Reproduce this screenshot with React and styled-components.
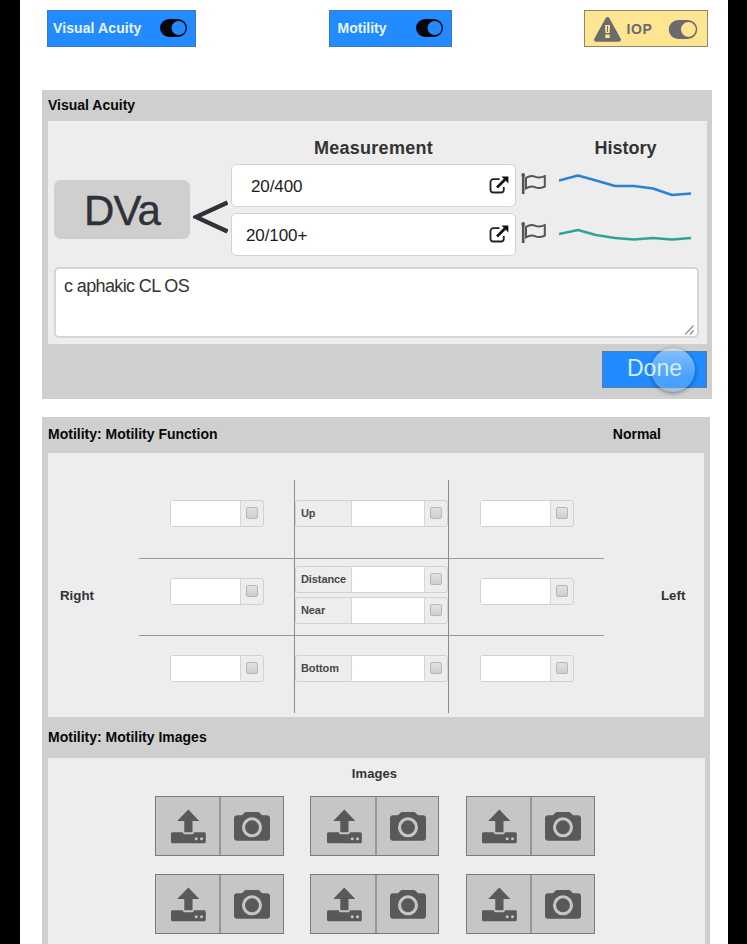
import React from "react";
import styled, { createGlobalStyle } from "styled-components";

const GlobalStyle = createGlobalStyle`
  *, *::before, *::after { box-sizing: border-box; }
  body { margin: 0; background: #000; overflow: hidden; }
  body, button, input, textarea { font-family: "Liberation Sans", Arial, Helvetica, sans-serif; }
`;

const Screen = styled.main`
  display: flex;
  flex-direction: column;
  width: 708px;
  height: 944px;
  margin-left: 20px;
  padding: 10px 0 0 22px;
  overflow: hidden;
  background: #fff;
`;

const Toolbar = styled.nav`
  display: flex;
  justify-content: space-between;
  height: 37px;
  width: 661px;
  margin: 0 0 43px 5px;
`;

const ToggleButton = styled.button`
  display: flex;
  align-items: center;
  justify-content: space-between;
  width: ${(p) => p.$width}px;
  height: 37px;
  padding: ${(p) => (p.$warning ? "1px 9px 0 9px" : "0 8px 2px 5px")};
  padding-left: ${(p) => p.$inset}px;
  border: 1px solid ${(p) => (p.$warning ? "#8f856b" : "#3d79b8")};
  background: ${(p) => (p.$warning ? "#fee591" : "#218bff")};
  color: ${(p) => (p.$warning ? "#6b6a6c" : "#e9f5ff")};
  font-size: 14px;
  font-weight: bold;
  line-height: 20px;
  white-space: nowrap;
`;

const ToggleLabel = styled.span`
  margin-right: ${(p) => p.$after || 0}px;
  letter-spacing: ${(p) => p.$spacing || 0}px;
`;

const Panel = styled.section`
  display: flex;
  flex-direction: column;
  flex: none;
  width: ${(p) => p.$width}px;
  height: ${(p) => p.$height}px;
  margin-bottom: 18px;
  padding-left: 6px;
  background: #cfcfcf;
`;

const PanelHeader = styled.header`
  display: flex;
  justify-content: space-between;
  flex: none;
  height: ${(p) => p.$height}px;
  padding: ${(p) => p.$top}px 49px 0 0;
`;

const PanelTitle = styled.h2`
  margin: 0;
  color: #080808;
  font-size: 14px;
  line-height: 16px;
`;

const PanelBody = styled.div`
  flex: none;
  width: ${(p) => p.$width}px;
  height: ${(p) => p.$height}px;
  background: #ededed;
`;

const AcuityGrid = styled.div`
  display: grid;
  grid-template-columns: 136px 41px 285px 36px 147px;
  grid-template-rows: 43px 92px;
  padding-left: 6px;
`;

const ColumnHeading = styled.h3`
  grid-column: ${(p) => p.$column};
  margin: 0;
  padding-top: 17px;
  color: #333;
  font-size: 18px;
  line-height: 21px;
  text-align: center;
  letter-spacing: ${(p) => p.$spacing}px;
`;

const AcuityBadge = styled.div`
  grid-row: 2;
  grid-column: 1;
  height: 59px;
  margin-top: 16px;
  border-radius: 7px;
  background: #cfcfcf;
  color: #303238;
  font-size: 42px;
  line-height: 62px;
  letter-spacing: -0.8px;
  text-align: center;
  -webkit-text-stroke: 0.4px #303238;
`;

const BranchSlot = styled.div`
  grid-row: 2;
  grid-column: 2;
  padding: 36px 0 0 3px;
  svg { display: block; }
`;

const Stack = styled.div`
  display: flex;
  flex-direction: column;
  grid-row: 2;
  grid-column: ${(p) => p.$column};
  gap: ${(p) => p.$gap || 0}px;
  padding: ${(p) => p.$pad || "0"};
  svg { display: block; flex: none; }
`;

const AcuityField = styled.div`
  display: flex;
  align-items: center;
  justify-content: space-between;
  height: 43px;
  padding: 2px 6px 0 ${(p) => p.$inset}px;
  border: 1px solid #d2d2d2;
  border-radius: 5px;
  background: #fff;
  color: #1c1c1c;
  font-size: 17px;
  letter-spacing: -0.1px;
  svg { margin-bottom: 3px; }
`;

const Notes = styled.div`
  display: flex;
  justify-content: space-between;
  width: 645px;
  height: 71px;
  margin: 11px 0 0 6px;
  padding: 7px 0 0 8px;
  border: 2px solid #d5d5d5;
  border-radius: 5px;
  background: #fff;
  color: #333;
  font-size: 18px;
  line-height: 21px;
  letter-spacing: -0.62px;
  svg { align-self: flex-end; }
`;

const PanelFooter = styled.footer`
  display: flex;
  justify-content: flex-end;
  padding: 7px 5px 0 0;
`;

const DoneButton = styled.button`
  position: relative;
  width: 105px;
  height: 37px;
  padding: 0 0 2px;
  border: 1px solid #567d9f;
  background: #218bff;
  color: #d8ecff;
  font-size: 23px;
  line-height: 33px;
`;

const TouchPoint = styled.span`
  position: absolute;
  top: -4px;
  left: 48px;
  width: 44px;
  height: 44px;
  border-radius: 50%;
  background: linear-gradient(rgba(190, 224, 250, 0.65), rgba(120, 190, 250, 0.45) 65%, rgba(110, 180, 245, 0.5));
  box-shadow: 0 1px 4px rgba(0, 0, 0, 0.45);
`;

const DoneLabel = styled.span`
  position: relative;
  z-index: 1;
`;

const MotilityLayout = styled.div`
  display: grid;
  grid-template-columns: 91px 465px 1fr;
  padding-top: 27px;
`;

const SideLabel = styled.div`
  padding: 108px 0 0 ${(p) => p.$inset}px;
  color: #333;
  font-size: 13.3px;
  font-weight: bold;
  line-height: 16px;
`;

const GazeGrid = styled.div`
  display: grid;
  grid-template-columns: 156px 154px 155px;
  grid-template-rows: 79px 77px 77px;
`;

const GazeCell = styled.div`
  display: flex;
  flex-direction: column;
  gap: 4px;
  padding: ${(p) => p.$top}px 0 0 ${(p) => p.$left || 0}px;
  border-right: ${(p) => (p.$right ? "1.5px solid #8c8c8c" : "0")};
  border-bottom: ${(p) => (p.$bottom ? "1.5px solid #999" : "0")};
`;

const GazeField = styled.div`
  display: flex;
  flex: none;
  width: ${(p) => (p.$labelled ? 153 : 94)}px;
  height: 27px;
  border: 1px solid #d1d1d1;
  border-radius: 3px;
`;

const GazeName = styled.span`
  width: 56px;
  padding-left: 5px;
  border-right: 1px solid #d5d5d5;
  color: #484848;
  font-size: 11px;
  font-weight: bold;
  line-height: 24px;
  letter-spacing: -0.1px;
`;

const GazeValue = styled.span`
  flex: 1;
  background: #fff;
`;

const GazeCheck = styled.span`
  display: flex;
  align-items: center;
  justify-content: center;
  width: 23px;
  padding: 0 1px 1px 0;
  border-left: 1px solid #d5d5d5;
`;

const CheckBox = styled.i`
  width: 12px;
  height: 12px;
  border: 1px solid #b7b7b7;
  border-radius: 2px;
  background: linear-gradient(#e2e2e2, #cecece);
`;

const ImagesHeading = styled.h3`
  margin: 0;
  padding: 8px 4px 0 0;
  color: #333;
  font-size: 13px;
  line-height: 16px;
  text-align: center;
  letter-spacing: 0.1px;
`;

const ImageGrid = styled.div`
  display: grid;
  grid-template-columns: repeat(3, 129px);
  gap: 18px 26.5px;
  padding: 14px 0 0 106.5px;
`;

const ImageActions = styled.div`
  display: flex;
  height: 60px;
  border: 1px solid #7b7b7b;
  background: #c6c6c6;
`;

const ImageAction = styled.button`
  display: flex;
  align-items: center;
  justify-content: center;
  flex: 1;
  padding: 0 0 0 ${(p) => p.$shift}px;
  border: 0;
  background: transparent;
  & + & { border-left: 2px solid #979797; }
`;

function ToggleIcon({ color, width = 27, height = 18 }) {
  return (
    <svg width={width} height={height} viewBox="0 0 27 18">
      <path
        fill={color}
        fillRule="evenodd"
        d="M9 0h9a9 9 0 0 1 0 18H9A9 9 0 0 1 9 0Zm9.600 2a7 7 0 1 0 0 14a7 7 0 0 0 0-14Z"
      />
    </svg>
  );
}

function WarningIcon() {
  return (
    <svg width="27" height="25" viewBox="0 0 27 25">
      <path
        fill="#6b6a6c"
        fillRule="evenodd"
        d="M13.500 0c.8 0 1.400.4 1.800 1.100l11.300 20.500c.8 1.500 0 3.200-1.800 3.200H2.200c-1.800 0-2.600-1.700-1.800-3.200L11.700 1.100C12.100.4 12.700 0 13.500 0ZM11 8l.4 8h4.200l.4-8ZM11.300 17.600v3.500h4.400v-3.500Z"
      />
      <path d="M13.500 9v6" stroke="#6b6a6c" strokeWidth="1" />
    </svg>
  );
}

function BranchIcon() {
  return (
    <svg width="35" height="34" viewBox="0 0 35 34">
      <path d="M34.500 2.500 3 17l31.500 14.500" fill="none" stroke="#303238" strokeWidth="4.500" />
    </svg>
  );
}

function OpenIcon() {
  return (
    <svg width="20" height="18" viewBox="0 0 20 18">
      <path
        d="M10.500 3.200H4.300A2.800 2.800 0 0 0 1.500 6v7.700a2.800 2.800 0 0 0 2.800 2.800H12a2.800 2.800 0 0 0 2.800-2.800V11"
        fill="none"
        stroke="#222"
        strokeWidth="1.800"
      />
      <path d="M8 11.500 16 3.500" stroke="#111" strokeWidth="2.600" />
      <path d="M12.500 .6h6.900V7.500Z" fill="#111" />
    </svg>
  );
}

function FlagIcon() {
  return (
    <svg width="26" height="22" viewBox="0 0 26 22">
      <path d="M2.200 2v19" stroke="#555" strokeWidth="2.600" />
      <circle cx="2.200" cy="2" r="1.900" fill="#555" />
      <path
        d="M5 4.800c3-1.800 6-2.600 9.500-1 3.200 1.400 5.500 1 9.300-.6v10.400c-3.600 1.600-6 2.200-9.300.7-3.500-1.500-6.500-.7-9.500 1Z"
        fill="none"
        stroke="#555"
        strokeWidth="2"
      />
    </svg>
  );
}

function Sparkline({ points, color }) {
  return (
    <svg width="136" height="30" viewBox="0 0 136 30">
      <polyline points={points} fill="none" stroke={color} strokeWidth="2.600" strokeLinejoin="round" />
    </svg>
  );
}

function ResizeGrip() {
  return (
    <svg width="12" height="12" viewBox="0 0 12 12">
      <path d="M0 10.500 8.500 1.500M5 10.500l3.500-4" stroke="#8a8a8a" strokeWidth="1.200" />
    </svg>
  );
}

function UploadIcon() {
  return (
    <svg width="35" height="35" viewBox="0 0 35 35">
      <path d="M17.300.4 28.300 12h-6.800v11.300h-8.200V12H6.200Z" fill="#595959" />
      <path
        d="M1.500 23.300h10.200c.4 1.400 1.200 2 2.400 2h6.600c1.200 0 2-.6 2.400-2h10.200c.9 0 1.500.6 1.500 1.500v8c0 .9-.6 1.500-1.500 1.500h-31.800c-.9 0-1.500-.6-1.500-1.500v-8c0-.9.6-1.500 1.500-1.500Z"
        fill="#595959"
      />
      <circle cx="25.200" cy="29.800" r="1.500" fill="#c6c6c6" />
      <circle cx="30.500" cy="29.800" r="1.500" fill="#c6c6c6" />
    </svg>
  );
}

function CameraIcon() {
  return (
    <svg width="36" height="29" viewBox="0 0 36 29">
      <path
        d="M3 3.300h5l2-2C10.600.4 11.400 0 12.400 0h11.200c1 0 1.800.4 2.400 1.300l2 2h5c1.800 0 3 1.200 3 3v19.400c0 1.800-1.200 3-3 3H3c-1.800 0-3-1.200-3-3V6.300c0-1.800 1.200-3 3-3Z"
        fill="#595959"
      />
      <circle cx="18" cy="15.300" r="8.500" fill="none" stroke="#c6c6c6" strokeWidth="3.100" />
    </svg>
  );
}

function Gaze({ name }) {
  return (
    <GazeField $labelled={Boolean(name)}>
      {name && <GazeName>{name}</GazeName>}
      <GazeValue />
      <GazeCheck>
        <CheckBox />
      </GazeCheck>
    </GazeField>
  );
}

export default function App() {
  return (
    <>
      <GlobalStyle />
      <Screen>
        <Toolbar>
          <ToggleButton $width={149} $inset={5}>
            <ToggleLabel $spacing={0.1}>Visual Acuity</ToggleLabel>
            <ToggleIcon color="#05080d" />
          </ToggleButton>
          <ToggleButton $width={123} $inset={8}>
            <ToggleLabel>Motility</ToggleLabel>
            <ToggleIcon color="#05080d" />
          </ToggleButton>
          <ToggleButton $width={124} $inset={9} $warning>
            <WarningIcon />
            <ToggleLabel $spacing={0.6} $after={10}>IOP</ToggleLabel>
            <ToggleIcon color="#6b6a6c" width={30} height={19} />
          </ToggleButton>
        </Toolbar>

        <Panel $width={670} $height={309}>
          <PanelHeader $height={31} $top={7}>
            <PanelTitle>Visual Acuity</PanelTitle>
          </PanelHeader>
          <PanelBody $width={659} $height={223}>
            <AcuityGrid>
              <ColumnHeading $column={3} $spacing={0.25}>Measurement</ColumnHeading>
              <ColumnHeading $column={5} $spacing={0}>History</ColumnHeading>
              <AcuityBadge>DVa</AcuityBadge>
              <BranchSlot>
                <BranchIcon />
              </BranchSlot>
              <Stack $column={3} $gap={6}>
                <AcuityField $inset={19}>
                  20/400
                  <OpenIcon />
                </AcuityField>
                <AcuityField $inset={14}>
                  20/100+
                  <OpenIcon />
                </AcuityField>
              </Stack>
              <Stack $column={4} $gap={27} $pad="9px 0 0 5px">
                <FlagIcon />
                <FlagIcon />
              </Stack>
              <Stack $column={5} $gap={23} $pad="6px 0 0 7px">
                <Sparkline color="#2a82d6" points="0,10.500 19,5.500 37,10.500 56,16 75,16 94,18.500 113,25 132,23.500" />
                <Sparkline color="#2fa398" points="0,11 19,7 37,12 56,15 75,16.500 94,15 113,16.500 132,15" />
              </Stack>
            </AcuityGrid>
            <Notes>
              c aphakic CL OS
              <ResizeGrip />
            </Notes>
          </PanelBody>
          <PanelFooter>
            <DoneButton>
              <TouchPoint />
              <DoneLabel>Done</DoneLabel>
            </DoneButton>
          </PanelFooter>
        </Panel>

        <Panel $width={668} $height={560}>
          <PanelHeader $height={36} $top={9}>
            <PanelTitle>Motility: Motility Function</PanelTitle>
            <PanelTitle>Normal</PanelTitle>
          </PanelHeader>
          <PanelBody $width={656} $height={264}>
            <MotilityLayout>
              <SideLabel $inset={12}>Right</SideLabel>
              <GazeGrid>
                <GazeCell $right $bottom $top={20} $left={31}><Gaze /></GazeCell>
                <GazeCell $right $bottom $top={20}><Gaze name="Up" /></GazeCell>
                <GazeCell $bottom $top={20} $left={31}><Gaze /></GazeCell>
                <GazeCell $right $bottom $top={19} $left={31}><Gaze /></GazeCell>
                <GazeCell $right $bottom $top={7}>
                  <Gaze name="Distance" />
                  <Gaze name="Near" />
                </GazeCell>
                <GazeCell $bottom $top={19} $left={31}><Gaze /></GazeCell>
                <GazeCell $right $top={19} $left={31}><Gaze /></GazeCell>
                <GazeCell $right $top={19}><Gaze name="Bottom" /></GazeCell>
                <GazeCell $top={19} $left={31}><Gaze /></GazeCell>
              </GazeGrid>
              <SideLabel $inset={57}>Left</SideLabel>
            </MotilityLayout>
          </PanelBody>
          <PanelHeader $height={41} $top={12}>
            <PanelTitle>Motility: Motility Images</PanelTitle>
          </PanelHeader>
          <PanelBody $width={657} $height={219}>
            <ImagesHeading>Images</ImagesHeading>
            <ImageGrid>
              {[0, 1, 2, 3, 4, 5].map((slot) => (
                <ImageActions key={slot}>
                  <ImageAction $shift={3} aria-label="Upload image"><UploadIcon /></ImageAction>
                  <ImageAction $shift={1} aria-label="Take photo"><CameraIcon /></ImageAction>
                </ImageActions>
              ))}
            </ImageGrid>
          </PanelBody>
        </Panel>
      </Screen>
    </>
  );
}
